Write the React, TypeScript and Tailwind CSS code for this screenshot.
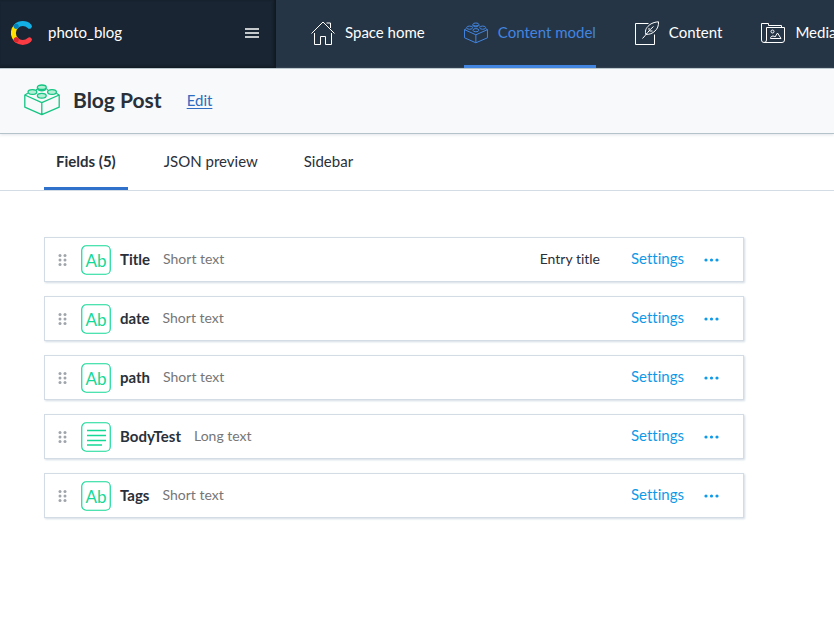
import type { ReactNode } from "react";

type Field = { name: string; type: string; long?: boolean; entryTitle?: boolean };

const fields: Field[] = [
  { name: "Title", type: "Short text", entryTitle: true },
  { name: "date", type: "Short text" },
  { name: "path", type: "Short text" },
  { name: "BodyTest", type: "Long text", long: true },
  { name: "Tags", type: "Short text" },
];

function Logo() {
  return (
    <svg className="h-6 w-[22px] shrink-0" viewBox="0 0 22 24" fill="none" strokeWidth="5" strokeLinecap="round" aria-hidden="true">
      <path d="M5.2 5.2a9.6 9.6 0 0 0 0 13.6" stroke="#ffe000" />
      <path d="M5.2 5.2a9.6 9.6 0 0 1 13.2 0" stroke="#12b0e5" />
      <path d="M5.2 18.8a9.6 9.6 0 0 0 13.2 0" stroke="#fb3b43" />
      <circle cx="5.2" cy="5.2" r="2.5" fill="#0681b8" />
      <circle cx="5.2" cy="18.8" r="2.5" fill="#d7282f" />
    </svg>
  );
}

function Brick({ className, fill, line }: { className: string; fill: string; line: number }) {
  return (
    <svg className={className} viewBox="0 0 36 32" fill="none" stroke="currentColor" strokeWidth={line} strokeLinejoin="round" aria-hidden="true">
      <path d="M3.800 9.300.8 11v12.200L17.800 30.700l17.400-7.500V11l-3-1.700M.8 11l17 7.700L35.200 11M17.800 18.700v12M13 5.300l-1 .5M22.800 5.300l1 .5" />
      <g fill={fill}>
        <path d="M13.500 3.400v1.400c1 2.600 7.600 2.600 8.600 0V3.400" />
        <ellipse cx="17.800" cy="3.200" rx="4.400" ry="2.200" />
        <path d="M4 8v1.200c1 2.400 7.800 2.400 8.800 0V8" stroke="none" />
        <ellipse cx="8.400" cy="8" rx="4.400" ry="2.400" />
        <path d="M23.600 8v1.200c1 2.400 7.800 2.400 8.800 0V8" stroke="none" />
        <ellipse cx="28" cy="8" rx="4.400" ry="2.400" />
        <ellipse cx="17.800" cy="11.800" rx="4.400" ry="2.400" />
      </g>
    </svg>
  );
}

function HomeIcon() {
  return (
    <svg className="h-6 w-6 shrink-0" viewBox="0 0 24 24" fill="none" stroke="currentColor" aria-hidden="true">
      <path d="M.5 12.500 12 1l11.500 11.500M3.500 12v11.500h6v-8h5v8h6V12M15.500 2h4v5" />
    </svg>
  );
}

function ContentIcon() {
  return (
    <svg className="h-6 w-6 shrink-0" viewBox="0 0 24 24" fill="none" stroke="currentColor" aria-hidden="true">
      <path d="M13.500 2.500H.5v21h19v-10" />
      <path d="M7.500 17.500C11 14 14 9 18.500 5.500M10.800 13.300C9.500 8.500 12 6 15 3.500 17.500 1.800 20.500 1 23.500.8c.2 4-1 7-3.500 9.200-2.500 2.400-5.500 3.700-9.200 3.300M14 8.800V7M14.500 10h3" />
    </svg>
  );
}

function MediaIcon() {
  return (
    <svg className="h-6 w-6 shrink-0" viewBox="0 0 24 24" fill="none" stroke="currentColor" aria-hidden="true">
      <path d="M3 21.500A2.500 2.500 0 0 1 .5 19V2.500h7v2h13v2M3 21.500A2.500 2.500 0 0 0 5.500 19V6.500h18V19a2.500 2.500 0 0 1-2.500 2.500z" />
      <circle cx="11.500" cy="10.500" r="1.500" />
      <path d="M9.500 17.500c0-1.500 1-2.500 2.500-2.500 1 0 1.500.5 2 1l2.500-4 3.500 5.500z" />
    </svg>
  );
}

function NavItem({ label, icon, active }: { label: string; icon: ReactNode; active?: boolean }) {
  return (
    <a
      href="#"
      aria-current={active ? "page" : undefined}
      className={`flex h-full shrink-0 items-center gap-[10px] border-b-[3px] text-[15px] leading-5 whitespace-nowrap ${active ? "border-[#4285e0] text-[#4285e0]" : "border-transparent text-white"}`}
    >
      {icon}
      <span className="pb-0.5">{label}</span>
    </a>
  );
}

function FieldIcon({ long }: { long?: boolean }) {
  return (
    <svg className="ml-[14px] size-[30px] shrink-0" viewBox="0 0 30 30" fill="none" stroke="#14d997" aria-hidden="true">
      <rect x=".75" y=".75" width="28.500" height="28.500" rx="4.500" strokeWidth="1.200" />
      {long ? (
        <path d="M6 8.500h19M6 13.500h19M6 18.500h19M6 23h15" strokeWidth="1.600" />
      ) : (
        <text x="15" y="22" textAnchor="middle" fontSize="17" fill="#14d997" stroke="none">
          Ab
        </text>
      )}
    </svg>
  );
}

function FieldRow({ field }: { field: Field }) {
  return (
    <li className="flex h-[45px] items-center border border-[#d3dce5] bg-white pt-px pr-6 pl-[13px] text-[15px] leading-5 shadow-[1px_1px_2px_#d3dce5]">
      <svg className="h-3 w-[9px] shrink-0" viewBox="0 0 9 12" fill="#9fa5ab" aria-hidden="true">
        {[1.5, 6, 10.5].map((y) => (
          <g key={y}>
            <circle cx="2" cy={y} r="1.500" />
            <circle cx="7" cy={y} r="1.500" />
          </g>
        ))}
      </svg>
      <FieldIcon long={field.long} />
      <span className="ml-[9px] pb-0.5 font-bold text-[#2a3039]">{field.name}</span>
      <span className="ml-[13px] pb-0.5 text-[14px] text-[#767676]">{field.type}</span>
      <span className="ml-auto pb-0.5 text-[14px] text-[#2a3039]">{field.entryTitle ? "Entry title" : ""}</span>
      <button type="button" className="ml-[31px] pb-1 text-[#0e9ae8]">
        Settings
      </button>
      <button type="button" aria-label={`More actions for ${field.name}`} className="ml-5 text-[#0e9ae8]">
        <svg className="h-4 w-[15px]" viewBox="0 0 15 16" fill="currentColor" aria-hidden="true">
          <circle cx="2" cy="8" r="1.600" />
          <circle cx="7.500" cy="8" r="1.600" />
          <circle cx="13" cy="8" r="1.600" />
        </svg>
      </button>
    </li>
  );
}

export default function App() {
  return (
    <div className="min-h-screen overflow-hidden bg-white font-[Lato,'Open_Sans',sans-serif] text-[#2a3039] [font-variant-ligatures:none]">
      <header className="flex h-[69px] border-b border-[#b4c3ca] bg-[#263545]">
        <div className="flex w-[276px] shrink-0 items-center bg-[#192532] pr-[17px] pb-[3px] pl-[11px] text-[15px] leading-5 text-white shadow-[inset_-2px_-1px_3px_#101820]">
          <Logo />
          <span className="ml-[15px] pb-0.5">photo_blog</span>
          <button type="button" aria-label="Open menu" className="ml-auto">
            <svg className="h-[10px] w-[14px]" viewBox="0 0 14 10" stroke="white" strokeWidth="1.500" aria-hidden="true">
              <path d="M0 1h14M0 5h14M0 9h14" />
            </svg>
          </button>
        </div>
        <nav className="flex min-w-0 grow gap-[39px] overflow-hidden pl-[35px]">
          <NavItem label="Space home" icon={<HomeIcon />} />
          <NavItem label="Content model" active icon={<Brick className="h-[22px] w-6 shrink-0" fill="#263545" line={1.5} />} />
          <NavItem label="Content" icon={<ContentIcon />} />
          <NavItem label="Media" icon={<MediaIcon />} />
        </nav>
      </header>

      <div className="flex h-[65px] items-center border-b border-[#b4c3ca] bg-[#f7f9fa] pb-[3px] pl-6 shadow-[0_1px_3px_#e0e4e8]">
        <Brick className="h-8 w-9 shrink-0 text-[#14c583]" fill="#b5f0d6" line={1.3} />
        <h1 className="ml-[13px] text-[21px] leading-7 font-bold">Blog Post</h1>
        <a href="#" className="ml-[25px] text-[15px] leading-5 text-[#2d6cc0] underline underline-offset-2">
          Edit
        </a>
      </div>

      <div role="tablist" className="flex h-[57px] border-b border-[#d3dce5] pl-11 text-[15px] leading-5">
        <button type="button" role="tab" aria-selected="true" className="border-b-[3px] border-[#3072cb] px-3 font-bold">
          Fields (5)
        </button>
        <button type="button" role="tab" aria-selected="false" className="ml-6 border-b-[3px] border-transparent px-3">
          JSON preview
        </button>
        <button type="button" role="tab" aria-selected="false" className="ml-[22px] border-b-[3px] border-transparent px-3">
          Sidebar
        </button>
      </div>

      <ul className="mx-11 mt-[46px] flex max-w-[700px] flex-col gap-[14px]">
        {fields.map((field) => (
          <FieldRow key={field.name} field={field} />
        ))}
      </ul>
    </div>
  );
}
